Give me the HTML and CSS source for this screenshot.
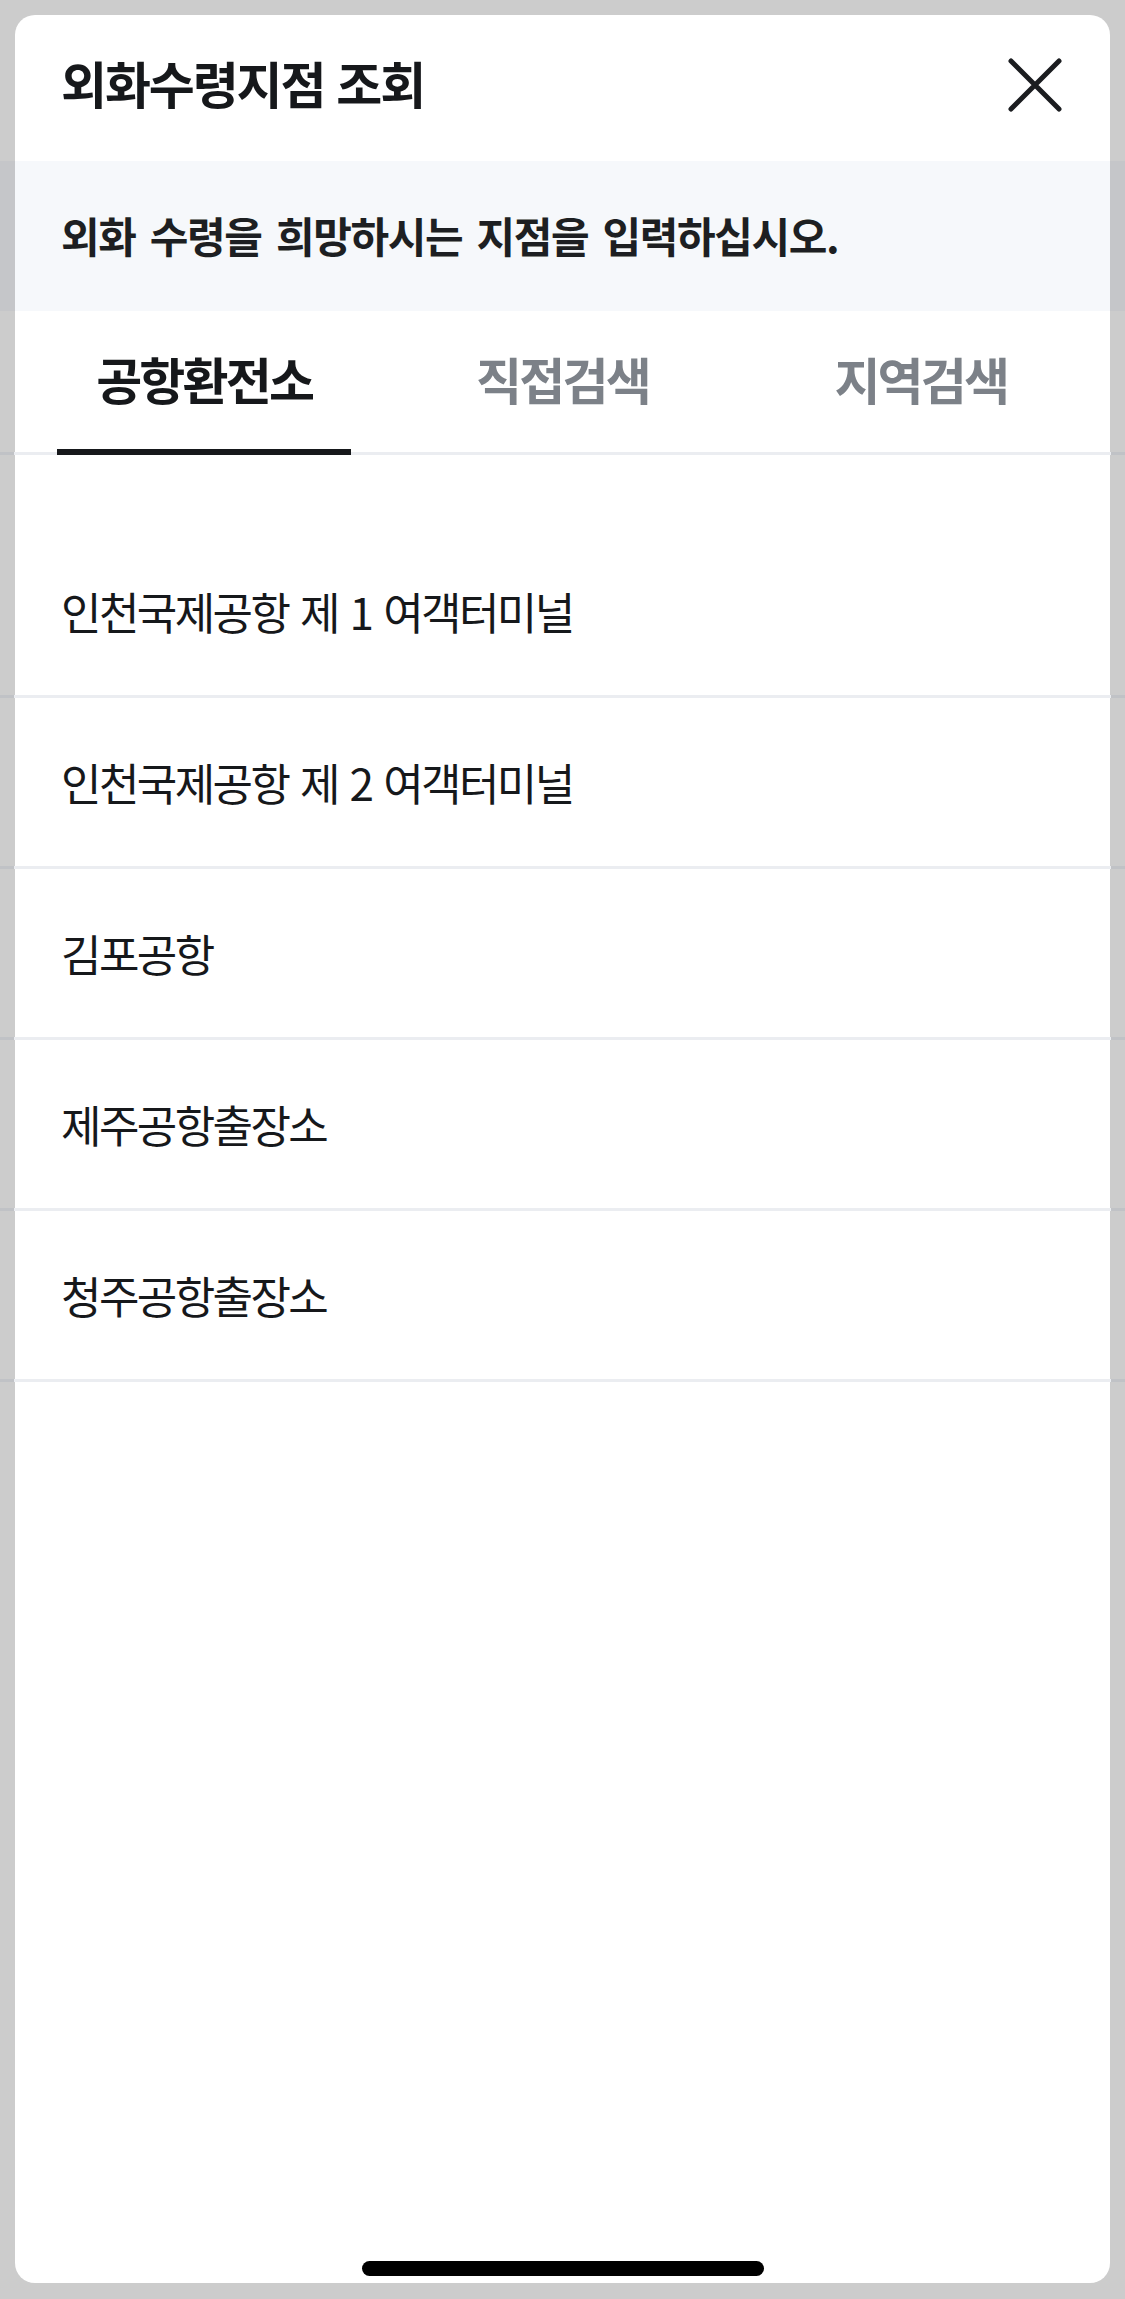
FILE: index.html
```html
<!DOCTYPE html>
<html lang="ko">
<head>
<meta charset="UTF-8">
<meta name="viewport" content="width=device-width, initial-scale=1.0">
<title>외화수령지점 조회</title>
<link rel="stylesheet" href="styles.css">
</head>
<body>

<div class="sheet">
    <div class="sheet-head">
        <h1>외화수령지점 조회</h1>
        <button class="close-button" aria-label="닫기">
            <svg width="54" height="54" viewBox="0 0 54 54">
                <path d="M3 3 L51 51 M51 3 L3 51" stroke="#1b1d20" stroke-width="5" stroke-linecap="round" fill="none"/>
            </svg>
        </button>
    </div>

    <p class="notice">외화 수령을 희망하시는 지점을 입력하십시오.</p>

    <div class="tabs">
        <div class="tab active">공항환전소</div>
        <div class="tab">직접검색</div>
        <div class="tab">지역검색</div>
    </div>

    <ul class="branch-list">
        <li>인천국제공항 제 1 여객터미널</li>
        <li>인천국제공항 제 2 여객터미널</li>
        <li>김포공항</li>
        <li>제주공항출장소</li>
        <li>청주공항출장소</li>
    </ul>

    <div class="home-bar"></div>
</div>

</body>
</html>
```

FILE: styles.css
```css
body {
    margin: 0;
    padding: 0;
    background-color: #cccccc;
    font-family: "Noto Sans CJK KR", "Noto Sans", sans-serif;
    color: #16181b;
}

.sheet {
    margin: 15px;
    height: 2268px;
    background-color: #ffffff;
    border-radius: 20px;
    display: flex;
    flex-direction: column;
}

/* 상단 제목 영역 */
.sheet-head {
    height: 140px;
    padding: 0 48px 6px 46px;
    display: flex;
    align-items: center;
    justify-content: space-between;
}

.sheet-head h1 {
    margin: 0 0 6px 0;
    font-size: 50px;
    font-weight: 700;
    letter-spacing: -2.1px;
}

.close-button {
    padding: 0;
    border: none;
    background: none;
    display: flex;
}

/* 안내 문구 (좌우 여백까지 이어짐) */
.notice {
    margin: 0 -15px;
    height: 146px;
    padding: 0 0 4px 61px;
    display: flex;
    align-items: center;
    font-size: 42px;
    font-weight: 700;
    letter-spacing: -1.4px;
    word-spacing: 4px;
    color: #1d1f22;
    background: linear-gradient(to right, #c5c6c9 15px, #f6f8fb 15px, #f6f8fb calc(100% - 15px), #c5c6c9 calc(100% - 15px));
}

.tabs {
    margin: 0 -15px;
    padding: 0 25px;
    height: 141px;
    display: flex;
    border-bottom: 3px solid #ebedf1;
    border-image: linear-gradient(to right, #c0c2c6 15px, #ebedf1 15px, #ebedf1 calc(100% - 15px), #c0c2c6 calc(100% - 15px)) 1;
}

.tab {
    flex: 1;
    margin: 0 32px -3px;
    padding-bottom: 4px;
    border-bottom: 6px solid transparent;
    display: flex;
    align-items: center;
    justify-content: center;
    font-size: 50px;
    font-weight: 700;
    letter-spacing: -2.8px;
    color: #7c8188;
}

.tab.active {
    color: #16181b;
    border-bottom-color: #16181b;
}

/* 지점 목록 */
.branch-list {
    list-style: none;
    margin: 0 -15px;
    padding: 72px 0 0 0;
}

.branch-list li {
    height: 168px;
    padding-left: 61px;
    display: flex;
    align-items: center;
    font-size: 44px;
    font-weight: 400;
    letter-spacing: -2.6px;
    word-spacing: 2px;
    border-bottom: 3px solid #ebedf1;
    border-image: linear-gradient(to right, #c0c2c6 15px, #ebedf1 15px, #ebedf1 calc(100% - 15px), #c0c2c6 calc(100% - 15px)) 1;
}

.home-bar {
    margin: auto auto 7px auto;
    width: 402px;
    height: 15px;
    border-radius: 8px;
    background-color: #000000;
}
```
